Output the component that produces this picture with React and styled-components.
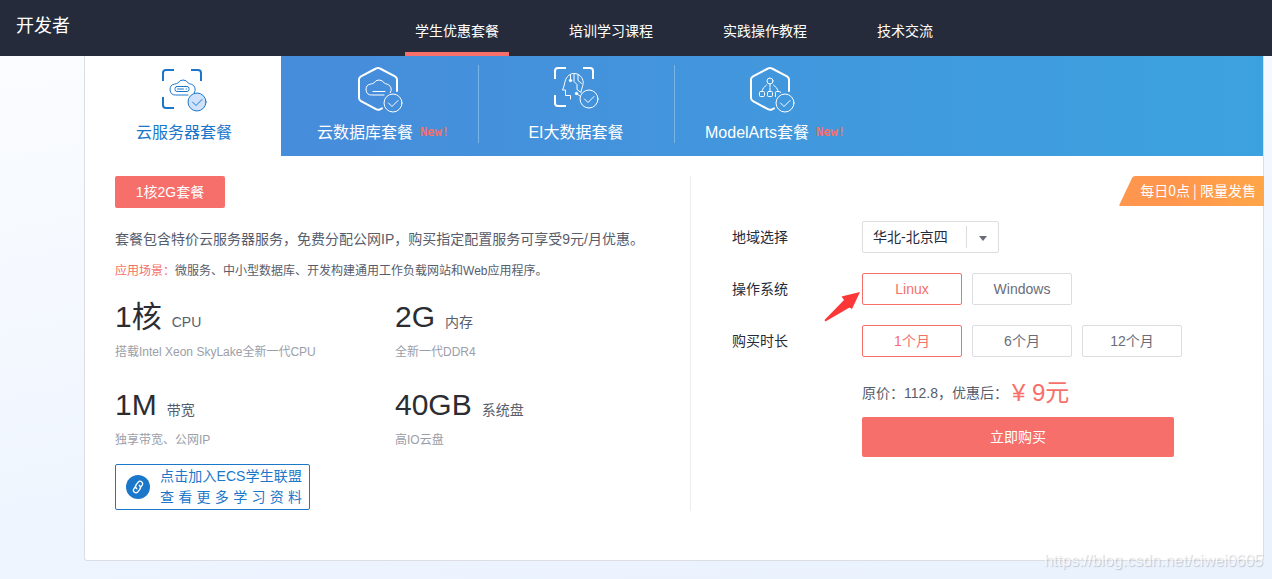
import React, { useState } from "react";
import styled, { createGlobalStyle } from "styled-components";

const coral = "#f66f6a";
const blue = "#1b77ca";
const ink = "#252b3a";

const GlobalStyle = createGlobalStyle`
  *, *::before, *::after { box-sizing: border-box; }
  body {
    margin: 0;
    min-height: 100vh;
    background: linear-gradient(170deg, #fafcff 8%, #eaf2fe 92%) no-repeat;
    color: #575d6c;
    font-family: "Liberation Sans", "Noto Sans CJK SC", sans-serif;
    font-size: 14px;
    line-height: 20px;
  }
  button, select { font: inherit; color: inherit; margin: 0; cursor: pointer; }
  p, h1, h2, dl, dd, dt { margin: 0; font-weight: 400; }
`;

const Header = styled.header`
  display: flex;
  align-items: flex-start;
  height: 56px;
  padding-left: 16px;
  background: ${ink};
  color: #fff;
`;

const Brand = styled.h1`
  flex: 0 0 389px;
  font-size: 18px;
  line-height: 52px;
`;

const Nav = styled.nav`
  display: flex;
  gap: 50px;
`;

const NavLink = styled.a`
  height: 56px;
  padding: 6px 10px 0;
  border-bottom: 4px solid ${(p) => (p.$active ? coral : "transparent")};
  color: #fff;
  line-height: 50px;
  text-decoration: none;
`;

const Card = styled.main`
  margin: 0 8px 18px 84px;
  border: 1px solid #dcdee3;
  border-top: 0;
  border-radius: 0 0 3px 3px;
  background: #fff;
`;

const TabBar = styled.div`
  display: flex;
  background: linear-gradient(90deg, #468edb 24%, #3ca2df);
`;

const Tab = styled.button`
  position: relative;
  display: flex;
  flex-direction: column;
  align-items: center;
  flex: 0 0 196px;
  height: 100px;
  padding: 8px 0 0 2px;
  border: 0;
  background: ${(p) => (p.$active ? "#fff" : "transparent")};
  color: ${(p) => (p.$active ? blue : "#fff")};
  font-size: 16px;
  line-height: 24px;

  &:nth-child(n + 3)::before {
    content: "";
    position: absolute;
    left: 1px;
    top: 9px;
    width: 1px;
    height: 78px;
    background: #7ab5e8;
  }
`;

const TabIcon = styled.svg`
  width: 48px;
  height: 48px;
  margin-bottom: 9px;
  overflow: visible;
  fill: none;
  stroke: currentColor;
  stroke-width: 1;
  stroke-linecap: round;
  stroke-linejoin: round;
`;

const TabLabel = styled.span`
  display: flex;
  gap: 7px;
  padding-left: ${(p) => (p.$marked ? "6px" : 0)};
  white-space: nowrap;
`;

const NewMark = styled.span`
  color: ${coral};
  font: 700 12px/22px "DejaVu Sans Mono", monospace;
`;

const Content = styled.div`
  display: flex;
  padding: 20px 0 49px 30px;
`;

const Details = styled.section`
  flex: 0 0 576px;
  min-height: 335px;
  border-right: 1px solid #ebecef;
`;

const PlanButton = styled.button`
  width: 110px;
  height: 32px;
  padding: 0;
  border: 0;
  border-radius: 2px;
  background: ${coral};
  color: #fff;
  display: block;
`;

const Summary = styled.p`
  margin-top: 21px;
`;

const Scenario = styled.p`
  margin-top: 12px;
  font-size: 12px;

  strong { color: ${coral}; font-weight: 400; }
`;

const Specs = styled.dl`
  display: grid;
  grid-template-columns: 280px 280px;
  row-gap: 23px;
  margin-top: 16px;
`;

const SpecName = styled.dt`
  display: flex;
  align-items: baseline;
  gap: 10px;
  height: 45px;
  line-height: 40px;

  strong { color: #2b2d33; font-size: 30px; font-weight: 400; }
`;

const SpecNote = styled.dd`
  color: #9b9ea8;
  font-size: 12px;
  line-height: 20px;
`;

const JoinLink = styled.a`
  display: flex;
  align-items: center;
  gap: 10px;
  width: 195px;
  height: 46px;
  margin-top: 14px;
  padding: 0 7px 0 10px;
  border: 1px solid ${blue};
  border-radius: 2px;
  color: ${blue};
  line-height: 21px;
  text-decoration: none;

  svg { flex: none; }
`;

const JoinText = styled.span`
  flex: 1;

  span { display: block; text-align-last: justify; white-space: nowrap; }
`;

const Order = styled.section`
  position: relative;
  flex: 1;
  min-width: 0;
  padding: 45px 0 0 41px;
`;

const Ribbon = styled.div`
  position: absolute;
  top: 0;
  right: -1px;
  width: 145px;
  height: 30px;
  color: #fff;
  font-family: "Noto Sans CJK SC", sans-serif;
  line-height: 28px;

  svg { position: absolute; inset: 0; width: 100%; height: 100%; }
  span { position: relative; display: block; padding-right: 8px; text-align: right; white-space: nowrap; }
`;

const Field = styled.div`
  display: flex;
  align-items: center;
  height: 32px;
  margin-bottom: 20px;
`;

const FieldLabel = styled.label`
  flex: 0 0 130px;
  color: ${ink};
`;

const Choices = styled.div`
  position: relative;
  display: flex;
  gap: 10px;
`;

const Choice = styled.button`
  width: 100px;
  height: 32px;
  padding: 0;
  border: 1px solid ${(p) => (p.$active ? coral : "#dcdde0")};
  border-radius: 2px;
  background: #fff;
  color: ${(p) => (p.$active ? coral : "#696d78")};
`;

const SelectBox = styled.div`
  position: relative;
  width: 137px;

  &::before {
    content: "";
    position: absolute;
    right: 32px;
    top: 5px;
    width: 1px;
    height: 22px;
    background: #dcdde0;
  }

  &::after {
    content: "";
    position: absolute;
    right: 12px;
    top: 15px;
    border: 4px solid transparent;
    border-top: 5px solid #696d78;
    border-bottom: 0;
    pointer-events: none;
  }
`;

const Select = styled.select`
  appearance: none;
  width: 100%;
  height: 32px;
  padding: 0 40px 0 10px;
  border: 1px solid #dcdde0;
  border-radius: 2px;
  background: #fff;
  color: ${ink};
`;

const Pointer = styled.svg`
  position: absolute;
  left: -38px;
  top: 18px;
  width: 38px;
  height: 32px;
  pointer-events: none;
`;

const Price = styled.p`
  display: flex;
  align-items: center;
  gap: 4px;
  height: 32px;
  margin-bottom: 8px;
  padding-left: 130px;
  line-height: 32px;
  white-space: nowrap;

  strong { color: ${coral}; font-size: 24px; font-weight: 400; }
`;

const BuyButton = styled.button`
  display: block;
  width: 312px;
  height: 40px;
  margin-left: 130px;
  border: 0;
  border-radius: 2px;
  background: ${coral};
  color: #fff;
`;

const Watermark = styled.div`
  position: absolute;
  right: 9px;
  top: 551px;
  color: rgba(255, 255, 255, 0.75);
  font-size: 16px;
  text-shadow: 1px 1px 1px rgba(110, 115, 130, 0.35);
`;

const Check = ({ y = 38, fill }) => (
  <g>
    <circle cx="37" cy={y} r="9" fill={fill || "none"} />
    <path d={`M32.5 ${y}l3.5 3.5 6-6`} />
  </g>
);

const Brackets = ({ y }) => (
  <path
    strokeWidth="2"
    strokeLinecap="butt"
    d={`M3 ${y + 11}v-8q0-3 3-3h8M31 ${y}h7q3 0 3 3v8M3 ${y + 27}v8q0 3 3 3h8`}
  />
);

const Hexagon = () => (
  <path
    strokeWidth="2"
    d="M41 27V15.500q0-2-2-3.200L24 4.500q-2-1.200-4 0L5 12.300q-2 1.200-2 3.200v18.500q0 2 2 3.200l15 8q2 1.200 4 .2l2-1"
  />
);

const Cloud = ({ y }) => (
  <path d={`M28 ${y + 17}H15.500a5.500 5.500 0 0 1-1-10.900q2-.3 3.300-1a6 6 0 0 1 10.500 0q1.200.8 3 1.100a5.500 5.500 0 0 1 3 8.500`} />
);

const drawings = {
  server: (
    <>
      <Brackets y={6} />
      <Cloud y={14} />
      <rect x="15" y="22.500" width="14" height="5" rx="2" />
      <path d="M17.500 25h6M26 25h.5" />
      <Check fill="#cfe1fb" />
    </>
  ),
  database: (
    <>
      <Hexagon />
      <Cloud y={14} />
      <path d="M17 27.500h12" />
      <Check y={39} />
    </>
  ),
  ai: (
    <>
      <Brackets y={4} />
      <path d="M18.500 35v-3.500h-5V26h-3c1.500-3 1.700-5 2.500-8.500C14.500 12 18.500 9 23 9.500c5.500.7 9 5.500 8 11-.4 2.500-1.500 4.500-2 7.500" />
      <path d="M18.500 16v-5M22 10v7.500l3 3v5l4 3M26 10.500v6l3.500 3" />
      <circle cx="18.500" cy="16.500" r="1.200" fill="currentColor" />
      <circle cx="24.500" cy="29.500" r="1.200" fill="currentColor" />
      <path d="M25 30l3 2" />
      <Check y={35} />
    </>
  ),
  model: (
    <>
      <Hexagon />
      <circle cx="22" cy="17" r="3" />
      <path d="M22 20v7M18.500 21c-2.500 2-4 4-4.500 6M25.500 21c2.500 2 4 4 4.500 6" strokeDasharray="3 1" />
      <rect x="11.500" y="27.500" width="5" height="5" rx="1" />
      <rect x="19.500" y="27.500" width="5" height="5" rx="1" />
      <path d="M27.500 32.500v-4q0-1 1-1h3q1 0 1 1" />
      <Check y={39} />
    </>
  ),
};

const navItems = ["学生优惠套餐", "培训学习课程", "实践操作教程", "技术交流"];

const tabs = [
  { icon: "server", label: "云服务器套餐" },
  { icon: "database", label: "云数据库套餐", isNew: true },
  { icon: "ai", label: "EI大数据套餐" },
  { icon: "model", label: "ModelArts套餐", isNew: true },
];

const specs = [
  { value: "1核", unit: "CPU", note: "搭载Intel Xeon SkyLake全新一代CPU" },
  { value: "2G", unit: "内存", note: "全新一代DDR4" },
  { value: "1M", unit: "带宽", note: "独享带宽、公网IP" },
  { value: "40GB", unit: "系统盘", note: "高IO云盘" },
];

function ChoiceField({ id, label, options, children }) {
  const [picked, setPicked] = useState(options[0]);
  return (
    <Field>
      <FieldLabel as="span" id={id}>{label}</FieldLabel>
      <Choices role="group" aria-labelledby={id}>
        {options.map((o) => (
          <Choice key={o} type="button" $active={o === picked} aria-pressed={o === picked} onClick={() => setPicked(o)}>
            {o}
          </Choice>
        ))}
        {children}
      </Choices>
    </Field>
  );
}

export default function App() {
  const [tab, setTab] = useState("server");
  return (
    <>
      <GlobalStyle />
      <Header>
        <Brand>开发者</Brand>
        <Nav>
          {navItems.map((name, i) => (
            <NavLink key={name} href="#" $active={i === 0}>{name}</NavLink>
          ))}
        </Nav>
      </Header>
      <Card>
        <TabBar role="tablist">
          {tabs.map((t) => (
            <Tab key={t.icon} type="button" role="tab" aria-selected={t.icon === tab} $active={t.icon === tab} onClick={() => setTab(t.icon)}>
              <TabIcon viewBox="0 0 48 48" aria-hidden="true">{drawings[t.icon]}</TabIcon>
              <TabLabel $marked={t.isNew}>
                {t.label}
                {t.isNew && <NewMark>New!</NewMark>}
              </TabLabel>
            </Tab>
          ))}
        </TabBar>
        <Content>
          <Details>
            <PlanButton type="button">1核2G套餐</PlanButton>
            <Summary>套餐包含特价云服务器服务，免费分配公网IP，购买指定配置服务可享受9元/月优惠。</Summary>
            <Scenario>
              <strong>应用场景：</strong>微服务、中小型数据库、开发构建通用工作负载网站和Web应用程序。
            </Scenario>
            <Specs>
              {specs.map((s) => (
                <div key={s.unit}>
                  <SpecName><strong>{s.value}</strong>{s.unit}</SpecName>
                  <SpecNote>{s.note}</SpecNote>
                </div>
              ))}
            </Specs>
            <JoinLink href="#">
              <svg width="24" height="24" viewBox="0 0 24 24" fill="none" stroke="#fff" strokeWidth="1.300" strokeLinecap="round" aria-hidden="true">
                <circle cx="12" cy="12" r="12" fill={blue} stroke="none" />
                <path d="M10.800 13.800c-1.600-1.200-1.600-2.800-.6-4.200l2-2.500c2-2.400 5.600.2 4 3l-2.200 3M13.200 10.200c1.600 1.200 1.600 2.800.6 4.200l-2 2.500c-2 2.400-5.600-.2-4-3l2.200-3" />
              </svg>
              <JoinText>
                <span>点击加入ECS学生联盟</span>
                <span>查 看 更 多 学 习 资 料</span>
              </JoinText>
            </JoinLink>
          </Details>
          <Order>
            <Ribbon>
              <svg viewBox="0 0 145 30" preserveAspectRatio="none" aria-hidden="true">
                <defs>
                  <linearGradient id="ribbonFill">
                    <stop offset="0.4" stopColor="#ff964d" />
                    <stop offset="1" stopColor="#ffa648" />
                  </linearGradient>
                </defs>
                <path d="M16 0H145V30H1Q0 30 .5 28.500L13 2Q14 0 16 0Z" fill="url(#ribbonFill)" />
              </svg>
              <span>每日0点 | 限量发售</span>
            </Ribbon>
            <Field>
              <FieldLabel htmlFor="region">地域选择</FieldLabel>
              <SelectBox>
                <Select id="region" defaultValue="bj4">
                  <option value="bj4">华北-北京四</option>
                </Select>
              </SelectBox>
            </Field>
            <ChoiceField id="os" label="操作系统" options={["Linux", "Windows"]}>
              <Pointer viewBox="0 0 38 32" aria-hidden="true">
                <path d="M36 1L17.500 5.500L20 9L.5 29L1.500 30.500L25.500 16.500L28 18Z" fill="#fb3837" />
              </Pointer>
            </ChoiceField>
            <ChoiceField id="period" label="购买时长" options={["1个月", "6个月", "12个月"]} />
            <Price>
              <span>原价：112.8，优惠后：</span>
              <strong>¥ 9元</strong>
            </Price>
            <BuyButton type="button">立即购买</BuyButton>
          </Order>
        </Content>
      </Card>
      <Watermark>https://blog.csdn.net/ciwei0605</Watermark>
    </>
  );
}
